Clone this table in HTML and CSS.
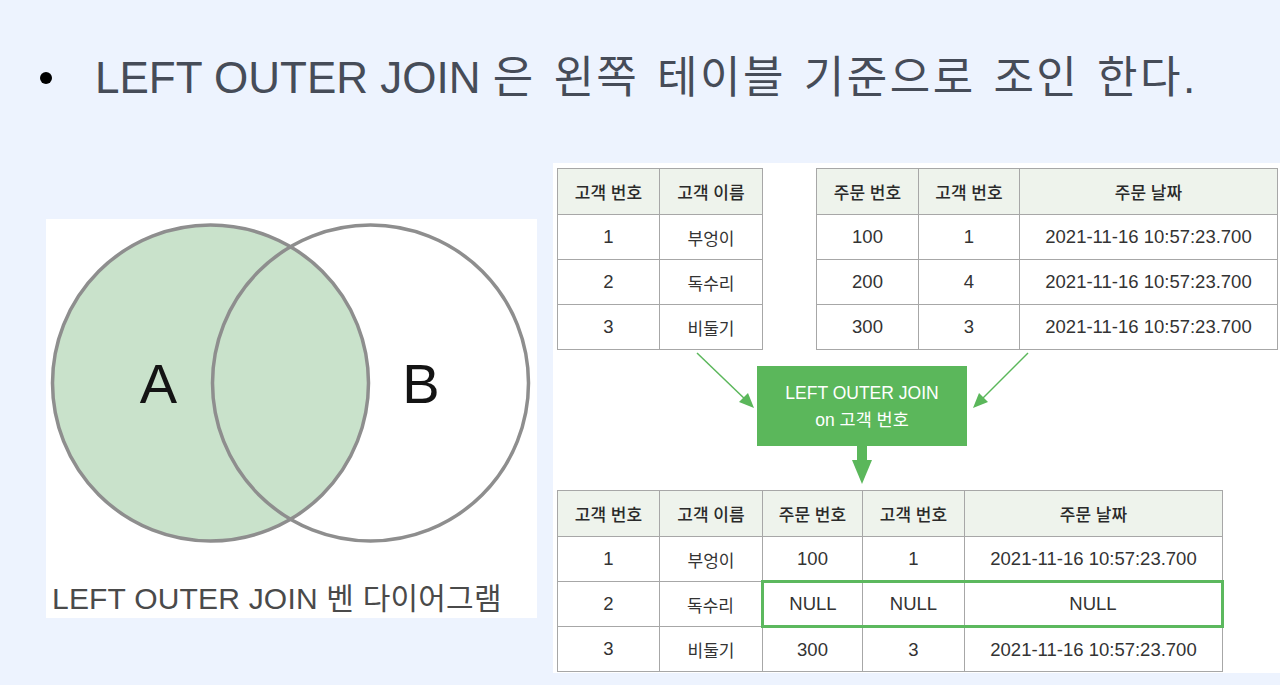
FILE: index.html
```html
<!DOCTYPE html>
<html lang="ko">
<head>
<meta charset="utf-8">
<title>LEFT OUTER JOIN</title>
<link rel="stylesheet" href="styles.css">
</head>
<body>
<div class="slide">
  <header class="title">
    <span class="bullet"></span>
    <h1>LEFT OUTER JOIN <span class="title-ko">은 왼쪽 테이블 기준으로 조인 한다.</span></h1>
  </header>
  <main class="content">
    <figure class="venn">
      <svg class="venn-svg" width="491" height="360" viewBox="0 0 491 360">
        <circle cx="164.5" cy="164" r="158" fill="#c9e2cb" stroke="#8e8e8e" stroke-width="3.5"/>
        <circle cx="324.5" cy="164" r="158" fill="none" stroke="#8e8e8e" stroke-width="3.5"/>
        <text x="112.5" y="184" class="venn-label" text-anchor="middle">A</text>
        <text x="375" y="184" class="venn-label" text-anchor="middle">B</text>
      </svg>
      <figcaption class="venn-caption">LEFT OUTER JOIN 벤 다이어그램</figcaption>
    </figure>

    <section class="diagram">
      <div class="top-row">
        <table class="tbl tbl-customer">
          <colgroup><col class="w102"><col class="w103"></colgroup>
          <thead><tr><th>고객 번호</th><th>고객 이름</th></tr></thead>
          <tbody>
            <tr><td>1</td><td class="ko">부엉이</td></tr>
            <tr><td>2</td><td class="ko">독수리</td></tr>
            <tr><td>3</td><td class="ko">비둘기</td></tr>
          </tbody>
        </table>
        <table class="tbl tbl-order">
          <colgroup><col class="w102"><col class="w101"><col class="w258"></colgroup>
          <thead><tr><th>주문 번호</th><th>고객 번호</th><th>주문 날짜</th></tr></thead>
          <tbody>
            <tr><td>100</td><td>1</td><td>2021-11-16 10:57:23.700</td></tr>
            <tr><td>200</td><td>4</td><td>2021-11-16 10:57:23.700</td></tr>
            <tr><td>300</td><td>3</td><td>2021-11-16 10:57:23.700</td></tr>
          </tbody>
        </table>
      </div>

      <div class="join">
        <div class="join-box">LEFT OUTER JOIN<br>on 고객 번호</div>
        <svg class="down-arrow" width="20" height="38" viewBox="0 0 20 38">
          <rect x="5" y="0" width="10" height="15" fill="#5bb75b"/>
          <polygon points="0,14 20,14 10,38" fill="#5bb75b"/>
        </svg>
      </div>

      <table class="tbl tbl-result">
        <colgroup><col class="w102"><col class="w103"><col class="w100"><col class="w102"><col class="w258"></colgroup>
        <thead><tr><th>고객 번호</th><th>고객 이름</th><th>주문 번호</th><th>고객 번호</th><th>주문 날짜</th></tr></thead>
        <tbody>
          <tr><td>1</td><td class="ko">부엉이</td><td>100</td><td>1</td><td>2021-11-16 10:57:23.700</td></tr>
          <tr class="null-row"><td>2</td><td class="ko">독수리</td><td class="hl hl-first">NULL</td><td class="hl">NULL</td><td class="hl hl-last">NULL</td></tr>
          <tr><td>3</td><td class="ko">비둘기</td><td>300</td><td>3</td><td>2021-11-16 10:57:23.700</td></tr>
        </tbody>
      </table>

      <svg class="join-arrows" width="727" height="510" viewBox="0 0 727 510">
        <line x1="144" y1="190" x2="195" y2="239" stroke="#5bb75b" stroke-width="1.5"/>
        <polygon points="201,245 186,239 195,230" fill="#5bb75b"/>
        <line x1="475" y1="190" x2="426" y2="239" stroke="#5bb75b" stroke-width="1.5"/>
        <polygon points="420,245 426,230 435,239" fill="#5bb75b"/>
      </svg>
    </section>
  </main>
</div>
</body>
</html>
```

FILE: styles.css
```css
* { box-sizing: border-box; }

html, body {
  margin: 0;
  padding: 0;
}

body {
  background: #edf3fe;
  font-family: "Liberation Sans", "Noto Sans CJK KR", sans-serif;
  width: 1280px;
  height: 685px;
  overflow: hidden;
}

.slide {
  width: 1280px;
  height: 685px;
}

/* ---------- title ---------- */
.title {
  display: flex;
  align-items: center;
  height: 163px;
  padding: 53px 0 60px 40px;
}

.bullet {
  width: 12px;
  height: 12px;
  border-radius: 50%;
  background: #000;
  flex: none;
}

.title h1 {
  margin: 0 0 0 43px;
  height: 50px;
  line-height: 50px;
  font-size: 44px;
  font-weight: normal;
  color: #464c58;
  white-space: nowrap;
}

.title-ko {
  letter-spacing: 2.5px;
  word-spacing: 3px;
}

/* ---------- content ---------- */
.content {
  display: flex;
  align-items: flex-start;
}

.venn {
  margin: 56px 0 0 46px;
  width: 491px;
  height: 399px;
  background: #fff;
  display: flex;
  flex-direction: column;
}

.venn-svg {
  display: block;
  flex: none;
}

.venn-label {
  font-family: "Liberation Sans", sans-serif;
  font-size: 56px;
  fill: #141414;
}

.venn-caption {
  margin: 5px 0 0 6px;
  font-size: 30px;
  line-height: 29px;
  letter-spacing: 0.2px;
  color: #4a4a4a;
  white-space: nowrap;
}

/* ---------- right diagram ---------- */
.diagram {
  position: relative;
  margin-left: 16px;
  width: 727px;
  height: 510px;
  background: #fff;
  padding: 5px 4px 0 4px;
}

.top-row {
  display: flex;
  gap: 53px;
  align-items: flex-start;
}

.tbl {
  border-collapse: collapse;
  table-layout: fixed;
  color: #333;
}

.tbl th,
.tbl td {
  border: 1px solid #a7a7a7;
  text-align: center;
  vertical-align: middle;
  padding: 0;
  height: 45px;
  white-space: nowrap;
}

.tbl th {
  background: #eef3ec;
  font-family: "Noto Sans CJK KR", sans-serif;
  font-size: 17px;
  font-weight: 500;
  height: 46px;
  color: #2a2a2a;
}

.tbl td {
  font-size: 18.5px;
}

.tbl td.ko {
  font-family: "Noto Sans CJK KR", sans-serif;
  font-size: 17px;
}

.tbl-customer { width: 205px; }
.tbl-order { width: 461px; }
.tbl-result { width: 665px; }

.w100 { width: 100px; }
.w101 { width: 101px; }
.w102 { width: 102px; }
.w103 { width: 103px; }
.w258 { width: 258px; }

.tbl td.hl {
  border-top: 3px solid #5cb85e;
  border-bottom: 3px solid #5cb85e;
}
.tbl td.hl-first { border-left: 3px solid #5cb85e; }
.tbl td.hl-last { border-right: 3px solid #5cb85e; }

.join {
  display: flex;
  flex-direction: column;
  align-items: center;
  width: 210px;
  margin: 16px 0 6px 200px;
}

.join-box {
  width: 210px;
  height: 80px;
  background: #5bb75b;
  color: #fff;
  display: flex;
  align-items: center;
  justify-content: center;
  text-align: center;
  font-size: 17.5px;
  line-height: 27px;
  padding-top: 2px;
}

.down-arrow {
  display: block;
}

.join-arrows {
  position: absolute;
  left: 0;
  top: 0;
  pointer-events: none;
}
```
